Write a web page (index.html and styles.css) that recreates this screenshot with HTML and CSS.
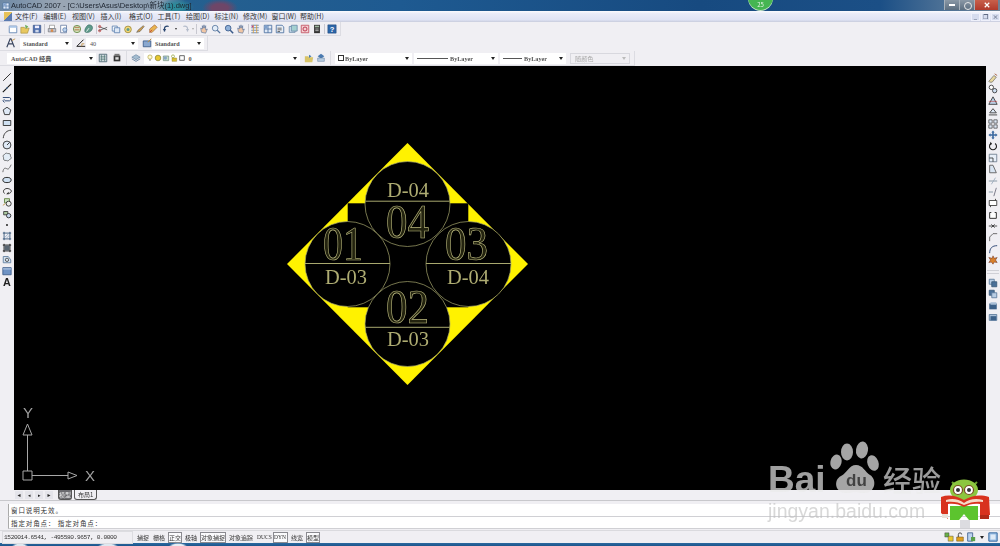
FILE: index.html
```html
<!DOCTYPE html>
<html lang="zh-CN">
<head>
<meta charset="utf-8">
<title>AutoCAD 2007</title>
<link rel="stylesheet" href="styles.css">
</head>
<body>
<svg class="defs" width="0" height="0" aria-hidden="true">
  <defs>
    <symbol id="i-new" viewBox="0 0 12 12"><path d="M1.5 2.5h9v8h-9z" fill="#fff" stroke="#5a7fb0"/><path d="M1.5 2.5h9v2h-9z" fill="#a9c4e6"/></symbol>
    <symbol id="i-open" viewBox="0 0 12 12"><path d="M1 4h4l1 1h5l-2 6H1z" fill="#e8c860" stroke="#a08a3a" stroke-width=".7"/><path d="M6 1l4 2-3 3z" fill="#6fae5a"/></symbol>
    <symbol id="i-save" viewBox="0 0 12 12"><path d="M1.5 1.5h9v9h-9z" fill="#4f6fae" stroke="#2f4a80" stroke-width=".7"/><path d="M3.5 2h5v3h-5z" fill="#eef"/><path d="M4 7h4v3H4z" fill="#cfd8ea"/></symbol>
    <symbol id="i-print" viewBox="0 0 12 12"><path d="M3 1.5h6v4H3z" fill="#fff" stroke="#777" stroke-width=".7"/><path d="M1.5 5.5h9v4h-9z" fill="#c3c6d2" stroke="#666" stroke-width=".7"/><circle cx="6" cy="8" r="1.6" fill="#d98a4a"/></symbol>
    <symbol id="i-prev" viewBox="0 0 12 12"><path d="M2 1.5h7v9H2z" fill="#fff" stroke="#6b7fa5"/><circle cx="7" cy="7" r="2.5" fill="#bcd3ee" stroke="#4a6a9a" stroke-width=".8"/></symbol>
    <symbol id="i-plot" viewBox="0 0 12 12"><circle cx="6" cy="6" r="4.4" fill="#cfe0b8" stroke="#6a8a4a"/><path d="M3 4h6M3 7h6" stroke="#b05a30" stroke-width=".9"/></symbol>
    <symbol id="i-pub" viewBox="0 0 12 12"><path d="M6 1c3 0 5 2 4 5s-5 5-8 4 1-9 4-9z" fill="#5f9a8a" stroke="#3a6a66" stroke-width=".7"/><path d="M3 9l3-4" stroke="#fff"/></symbol>
    <symbol id="i-cut" viewBox="0 0 12 12"><path d="M1 3l10 4M1 8l10-4" stroke="#444" stroke-width=".9" fill="none"/><circle cx="2" cy="3" r="1.3" fill="none" stroke="#c04040"/><circle cx="2" cy="8" r="1.3" fill="none" stroke="#c04040"/></symbol>
    <symbol id="i-copy" viewBox="0 0 12 12"><path d="M1.5 2.5h6v6h-6z" fill="#fff" stroke="#5a7fb0"/><path d="M4 4.5h6.500v6H4z" fill="#dfe9f6" stroke="#5a7fb0"/></symbol>
    <symbol id="i-paste" viewBox="0 0 12 12"><circle cx="6" cy="6.5" r="4" fill="#f2d878" stroke="#a08a3a"/><circle cx="6" cy="6.5" r="1.8" fill="#5f9a8a"/></symbol>
    <symbol id="i-brush" viewBox="0 0 12 12"><path d="M2 10l2-3 6-5 1 1-5 6z" fill="#d2a04a" stroke="#555" stroke-width=".7"/></symbol>
    <symbol id="i-match" viewBox="0 0 12 12"><path d="M2 10V6l6-5 3 3-6 6z" fill="#e8b450" stroke="#9a5a30" stroke-width=".7"/><path d="M2 10l3-3" stroke="#c04040"/></symbol>
    <symbol id="i-undo" viewBox="0 0 12 12"><path d="M3 9V5c0-2 3-3 5-2" fill="none" stroke="#26446e" stroke-width="1.6"/><path d="M1 6l2 3 2-3z" fill="#26446e"/></symbol>
    <symbol id="i-redo" viewBox="0 0 12 12"><path d="M9 9V5C9 3 6 2 4 3" fill="none" stroke="#b4bccb" stroke-width="1.4"/><path d="M7 6l2 3 2-3z" fill="#b4bccb"/></symbol>
    <symbol id="i-pan" viewBox="0 0 12 12"><path d="M3 10L2 5l2 1V2l1 3 1-4 1 4 1-3v5l2-1-2 5z" fill="#f1c6a4" stroke="#4a6a9a" stroke-width=".7"/></symbol>
    <symbol id="i-zoom" viewBox="0 0 12 12"><circle cx="5" cy="5" r="3.4" fill="#e3edf8" stroke="#55759e"/><path d="M7.5 7.5l3.500 3.500" stroke="#55759e" stroke-width="1.500"/></symbol>
    <symbol id="i-zoomb" viewBox="0 0 12 12"><circle cx="5" cy="5" r="3.4" fill="#8fb0d8" stroke="#3a5a8a"/><path d="M7.5 7.5l3.500 3.500" stroke="#3a5a8a" stroke-width="1.8"/></symbol>
    <symbol id="i-prop" viewBox="0 0 12 12"><path d="M1.5 1.5h9M1.5 4.5h9M1.5 7.5h9M1.5 10.5h9" stroke="#5a7fb0"/><path d="M4 1v10M8 1v10" stroke="#d9a040"/><path d="M2 2h2v2H2z" fill="#c04080"/></symbol>
    <symbol id="i-dc" viewBox="0 0 12 12"><path d="M1.5 1.5h9v9h-9z" fill="#dfe9f6" stroke="#4a6fa0"/><path d="M6 1.5v9M1.5 6h9" stroke="#4a6fa0"/><path d="M2 2h3.500v3.500H2z" fill="#7fa0cc"/></symbol>
    <symbol id="i-tp" viewBox="0 0 12 12"><path d="M1.5 1.5h7l2 2v7h-9z" fill="#e8eef6" stroke="#4a6fa0"/><path d="M3 5h5M3 7h5M3 9h3" stroke="#555"/></symbol>
    <symbol id="i-sheet" viewBox="0 0 12 12"><path d="M1.5 3h7v7h-7z" fill="#cfe2f0" stroke="#6a8aa8"/><path d="M4 1.5h7v7H4z" fill="#a4d0d0" stroke="#6a8aa8"/></symbol>
    <symbol id="i-mark" viewBox="0 0 12 12"><path d="M1.5 1.5h9v9h-9z" fill="#f4cfd0" stroke="#c05060"/><circle cx="6" cy="6" r="2.4" fill="none" stroke="#b02040"/></symbol>
    <symbol id="i-calc" viewBox="0 0 12 12"><path d="M2.5 1h7v10h-7z" fill="#333"/><path d="M3.5 2h5v2h-5z" fill="#9fb8a0"/><path d="M4 6h4M4 8h4" stroke="#ccc"/></symbol>
    <symbol id="i-help" viewBox="0 0 12 12"><path d="M1 1h10v10H1z" fill="#2c66a8" stroke="#1c4478" stroke-width=".6"/><text x="6" y="9.3" class="help-q">?</text></symbol>
    <symbol id="i-style" viewBox="0 0 12 12"><path d="M1 11L5 1h1l4 10M3 7h5" fill="none" stroke="#3a4660" stroke-width="1.4"/><path d="M7 3l4-2" stroke="#c09040"/></symbol>
    <symbol id="i-dim" viewBox="0 0 12 12"><path d="M1 10h10M1 10L9 2" stroke="#222" stroke-width="1.2" fill="none"/><path d="M7 10v-3h3" stroke="#c09040" fill="none"/></symbol>
    <symbol id="i-tab" viewBox="0 0 12 12"><path d="M1.5 3.500h9v7h-9z" fill="#8aa8d0" stroke="#3a5a88"/><path d="M7 5l4-4" stroke="#c09040" stroke-width="1.2"/></symbol>
    <symbol id="i-ws" viewBox="0 0 12 12"><path d="M1.5 1.5h9v9h-9z" fill="#dfe5ea" stroke="#44606e"/><path d="M3 4h6M3 6h6M3 8h6M4 2v8M8 2v8" stroke="#46706a" stroke-width=".8"/></symbol>
    <symbol id="i-ws2" viewBox="0 0 12 12"><path d="M2 3h8v7H2z" fill="#333"/><path d="M3 1h6v3H3z" fill="#777"/><path d="M4 5h4v3H4z" fill="#ddd"/></symbol>
    <symbol id="i-layer" viewBox="0 0 12 12"><path d="M6 2l5 3-5 3-5-3z" fill="#a4bcd0" stroke="#5a7a9a" stroke-width=".7"/><path d="M1 7l5 3 5-3" fill="none" stroke="#5a7a9a"/></symbol>
    <symbol id="i-bulb" viewBox="0 0 12 12"><circle cx="6" cy="4.6" r="3.2" fill="#fffbd0" stroke="#b0a040"/><path d="M5 8h2v2H5z" fill="#888"/></symbol>
    <symbol id="i-sun" viewBox="0 0 12 12"><circle cx="6" cy="6" r="4.2" fill="#e8c830" stroke="#7a7a30"/></symbol>
    <symbol id="i-frz" viewBox="0 0 12 12"><path d="M2 3h8v7H2z" fill="#c8dfc8" stroke="#6a8a7a"/><circle cx="5" cy="6" r="2.6" fill="#8aa8c8"/></symbol>
    <symbol id="i-lock" viewBox="0 0 12 12"><circle cx="4.5" cy="3.5" r="2.2" fill="none" stroke="#8a9a30"/><path d="M3 6h7v5H3z" fill="#d8c030" stroke="#8a7a30" stroke-width=".6"/></symbol>
    <symbol id="i-box" viewBox="0 0 12 12"><path d="M2.500 2.500h7v7h-7z" fill="#fff" stroke="#222"/></symbol>
    <symbol id="i-lprev" viewBox="0 0 12 12"><path d="M1 4h4l1 1h5l-1 6H1z" fill="#d8c468"/><path d="M6 2l3 2-3 2z" fill="#4a7ab0"/></symbol>
    <symbol id="i-lset" viewBox="0 0 12 12"><path d="M6 1l4 3-4 3-4-3z" fill="#4a7ab0"/><path d="M2 6h8v4H2z" fill="#b8cce0" stroke="#5a7a9a" stroke-width=".6"/></symbol>
    <symbol id="d-line" viewBox="0 0 12 12"><path d="M1.5 10.500l9-9" stroke="#222" stroke-width="1.1"/></symbol>
    <symbol id="d-xline" viewBox="0 0 12 12"><path d="M1 11L11 1" stroke="#111" stroke-width="1.3"/><circle cx="6" cy="6" r="1" fill="#4a7ab0"/></symbol>
    <symbol id="d-pline" viewBox="0 0 12 12"><path d="M1 3h8c2 0 2 4 0 4H3" fill="none" stroke="#24406e" stroke-width="1.1"/><path d="M3 5l-2 2 2 2" fill="none" stroke="#24406e"/></symbol>
    <symbol id="d-poly" viewBox="0 0 12 12"><path d="M6 1.500l4.600 3.200-1.700 5.600H3.100L1.400 4.700z" fill="#dfe9f6" stroke="#222"/></symbol>
    <symbol id="d-rect" viewBox="0 0 12 12"><path d="M1.500 3h9v6h-9z" fill="#cfe0f2" stroke="#222"/></symbol>
    <symbol id="d-arc" viewBox="0 0 12 12"><path d="M1.500 11C2 5 6 1.500 11 1.500" fill="none" stroke="#333" stroke-width="1.1"/></symbol>
    <symbol id="d-circle" viewBox="0 0 12 12"><circle cx="6" cy="6" r="4.700" fill="#dfe9f6" stroke="#222"/><path d="M6 6l3-3" stroke="#222"/></symbol>
    <symbol id="d-cloud" viewBox="0 0 12 12"><path d="M3 3c1-2 3-2 4-1 2-1 4 1 3 3 2 1 1 4-1 4-1 2-3 2-4 1-2 1-4-1-3-3C1 6 1 3 3 3z" fill="#e3ecf6" stroke="#444" stroke-width=".8"/></symbol>
    <symbol id="d-spline" viewBox="0 0 12 12"><path d="M1 11c1-6 3-5 5-4s3-1 5-5" fill="none" stroke="#555"/></symbol>
    <symbol id="d-ell" viewBox="0 0 12 12"><ellipse cx="6" cy="6" rx="5" ry="3.100" fill="#cfe0f2" stroke="#222" stroke-width="1.1"/></symbol>
    <symbol id="d-ellarc" viewBox="0 0 12 12"><path d="M3 9C0 6 3 3 6 3s6 2 5 4c-.5 1-2 2-3 2" fill="none" stroke="#222" stroke-width="1.1"/><path d="M8 7v3h-3" fill="#222"/></symbol>
    <symbol id="d-ins" viewBox="0 0 12 12"><path d="M3 2h6v5H3z" fill="#c8dfc0" stroke="#5a7a3a"/><circle cx="8" cy="8" r="3" fill="#eee" stroke="#222"/><path d="M1 10l3-2" stroke="#c09040"/></symbol>
    <symbol id="d-blk" viewBox="0 0 12 12"><path d="M2 3h5v4H2z" fill="#aac8a0" stroke="#333"/><circle cx="8" cy="8" r="2.600" fill="#c8d8ee" stroke="#222"/></symbol>
    <symbol id="d-pt" viewBox="0 0 12 12"><circle cx="6" cy="6" r="1.100" fill="#111"/></symbol>
    <symbol id="d-hatch" viewBox="0 0 12 12"><path d="M2.500 1v10M9.500 1v10M1 2.500h10M1 9.500h10" stroke="#2a4a70" stroke-width="1"/><path d="M3 8l5-5M5 9l4-4" stroke="#7a9abc" stroke-width=".8"/></symbol>
    <symbol id="d-grad" viewBox="0 0 12 12"><path d="M2.500 1v10M9.500 1v10M1 2.500h10M1 9.500h10" stroke="#222" stroke-width="1.200"/><path d="M3 3h6v6H3z" fill="#5a6672"/></symbol>
    <symbol id="d-reg" viewBox="0 0 12 12"><path d="M1.500 3h6l3 4v3.500h-9z" fill="#d4e2f0" stroke="#5a7a9a"/><circle cx="6" cy="7" r="2" fill="none" stroke="#444"/></symbol>
    <symbol id="d-tbl" viewBox="0 0 12 12"><path d="M1 2h10v8.500H1z" fill="#6f93c4" stroke="#3a5a88"/><path d="M1 3.500h10" stroke="#cfdff0"/></symbol>
    <symbol id="d-a" viewBox="0 0 12 12"><text x="6" y="11" class="a-glyph">A</text></symbol>
    <symbol id="m-erase" viewBox="0 0 12 12"><path d="M1 10l6-7 3 2-5 6H2z" fill="#e8d8a0" stroke="#555" stroke-width=".7"/><path d="M8 1l3 2" stroke="#a05030"/></symbol>
    <symbol id="m-copy" viewBox="0 0 12 12"><circle cx="4" cy="4" r="2.600" fill="#fff" stroke="#333"/><circle cx="8" cy="8" r="2.600" fill="#cfe0f2" stroke="#333"/></symbol>
    <symbol id="m-mirror" viewBox="0 0 12 12"><path d="M6 1L1 10h10z" fill="#bcd0e6" stroke="#333"/><path d="M1 6.500h10" stroke="#c04040" stroke-width=".7"/></symbol>
    <symbol id="m-off" viewBox="0 0 12 12"><path d="M6 2L2 7h8z" fill="#dfe9f6" stroke="#333"/><path d="M1 9.500h10" stroke="#333"/></symbol>
    <symbol id="m-arr" viewBox="0 0 12 12"><path d="M1 1h4v4H1zM7 1h4v4H7zM1 7h4v4H1zM7 7h4v4H7z" fill="#dfe9f6" stroke="#333" stroke-width=".8"/></symbol>
    <symbol id="m-move" viewBox="0 0 12 12"><path d="M6 .5L8 3H7v2h2V4l2.500 2L9 8V7H7v2h1l-2 2.500L4 9h1V7H3v1L.5 6 3 4v1h2V3H4z" fill="#3c6aa0"/></symbol>
    <symbol id="m-rot" viewBox="0 0 12 12"><path d="M8.500 3A4.200 4.200 0 1 1 3.500 3" fill="none" stroke="#222" stroke-width="1.300"/><path d="M3 1l2 2.500L2 5z" fill="#222"/></symbol>
    <symbol id="m-scale" viewBox="0 0 12 12"><path d="M1.500 1.500h9v9h-9z" fill="#e8eff8" stroke="#6a7a8a"/><path d="M1.500 6h4.500v4.500" fill="none" stroke="#333"/></symbol>
    <symbol id="m-str" viewBox="0 0 12 12"><path d="M2 1.500h4l4 9H2z" fill="#d8e4f2" stroke="#555"/></symbol>
    <symbol id="m-trim" viewBox="0 0 12 12"><path d="M1 6h10" stroke="#7a8a9a"/><path d="M9 2L4 10" stroke="#9ab"/></symbol>
    <symbol id="m-ext" viewBox="0 0 12 12"><path d="M1 6h5" stroke="#7a8a9a"/><path d="M10 1L7 11" stroke="#667"/></symbol>
    <symbol id="m-brk" viewBox="0 0 12 12"><path d="M1.500 3h9v6h-9z" fill="#fff" stroke="#333"/><path d="M9 1v2M3 9v2" stroke="#333"/></symbol>
    <symbol id="m-brka" viewBox="0 0 12 12"><path d="M2 3v7h8V3M2 3h2M8 3h2" fill="#fff" stroke="#222" stroke-width="1.100"/></symbol>
    <symbol id="m-join" viewBox="0 0 12 12"><path d="M1 6h10" stroke="#333"/><path d="M4 4l2 2-2 2M8 4L6 6l2 2" fill="none" stroke="#333"/></symbol>
    <symbol id="m-chm" viewBox="0 0 12 12"><path d="M2 11V6l4-4h5" fill="none" stroke="#555"/></symbol>
    <symbol id="m-fil" viewBox="0 0 12 12"><path d="M2 11C2 5 5 2 11 2" fill="none" stroke="#24406e" stroke-width="1.100"/></symbol>
    <symbol id="m-exp" viewBox="0 0 12 12"><path d="M6 1l1.500 3L11 3 9 6l2 3-3.500-.5L6 11 4 8.500 1 9l2-3-2-3 4 1z" fill="#d8802a" stroke="#6a2a1a" stroke-width=".6"/></symbol>
    <symbol id="o-a" viewBox="0 0 12 12"><path d="M1.500 1.500h6v6h-6z" fill="#b8cde4" stroke="#5a7a9a"/><path d="M4.500 4.500h6v6h-6z" fill="#4a7098" stroke="#3a5a7a"/></symbol>
    <symbol id="o-b" viewBox="0 0 12 12"><path d="M1.500 1.500h6v6h-6z" fill="#4a7098" stroke="#3a5a7a"/><path d="M4.500 4.500h6v6h-6z" fill="#b8cde4" stroke="#5a7a9a"/></symbol>
    <symbol id="o-c" viewBox="0 0 12 12"><path d="M1.500 3h9v7h-9z" fill="#3c6088"/><path d="M3 1.500h7v3H3z" fill="#a8bed6"/></symbol>
    <symbol id="o-d" viewBox="0 0 12 12"><path d="M1.500 3h9v7h-9z" fill="#a8bed6" stroke="#5a7a9a"/><path d="M3 5h7v5H3z" fill="#3c6088"/></symbol>
    <symbol id="t-a" viewBox="0 0 12 12"><path d="M1 1h5v5H1z" fill="#6ab04a" stroke="#333" stroke-width=".5"/><path d="M5 5h6v6H5z" fill="#e8c830" stroke="#333" stroke-width=".5"/></symbol>
    <symbol id="t-b" viewBox="0 0 12 12"><path d="M2 6h8v5H2z" fill="#e0a020" stroke="#6a4a10" stroke-width=".6"/><path d="M4 6V3a2 2 0 0 1 4 0" fill="none" stroke="#333"/></symbol>
    <symbol id="t-c" viewBox="0 0 12 12"><path d="M2 1h6v10H2z" fill="#bcd3ee" stroke="#3a5a88"/><path d="M6 6h5v5H6z" fill="#5aa04a"/></symbol>
    <symbol id="t-d" viewBox="0 0 12 12"><path d="M1 1h10v10H1z" fill="#9cc0e6" stroke="#3a6aa0" stroke-width="1.200"/><path d="M3 3h6v6H3z" fill="#dfeaf6"/></symbol>
  </defs>
</svg>

<div class="app">
  <header class="titlebar">
    <svg class="app-icon"><use href="#i-dc"/></svg>
    <span class="title">AutoCAD 2007 - [C:\Users\Asus\Desktop\新块(1).dwg]</span>
    <span class="badge">25</span>
    <div class="winbtns"><span class="wb wb-min"></span><span class="wb wb-max"></span><span class="wb wb-close"><svg class="x-mark" viewBox="0 0 8 8"><path d="M1 1l6 6M7 1L1 7"/></svg></span></div>
  </header>

  <nav class="menubar">
    <span class="menu-logo"></span>
    <span class="menu">文件(F)</span><span class="menu">编辑(E)</span><span class="menu">视图(V)</span><span class="menu">插入(I)</span><span class="menu">格式(O)</span><span class="menu">工具(T)</span><span class="menu">绘图(D)</span><span class="menu">标注(N)</span><span class="menu">修改(M)</span><span class="menu">窗口(W)</span><span class="menu">帮助(H)</span>
    <div class="mdi"><span class="mdi-btn">_</span><span class="mdi-btn">❐</span><span class="mdi-btn">×</span></div>
  </nav>

  <div class="tbrow tbrow-1">
    <div class="tbar tbar-std">
      <svg class="ic"><use href="#i-new"/></svg><svg class="ic"><use href="#i-open"/></svg><svg class="ic"><use href="#i-save"/></svg><i class="sep"></i>
      <svg class="ic"><use href="#i-print"/></svg><svg class="ic"><use href="#i-prev"/></svg><svg class="ic"><use href="#i-plot"/></svg><svg class="ic"><use href="#i-pub"/></svg><i class="sep"></i>
      <svg class="ic"><use href="#i-cut"/></svg><svg class="ic"><use href="#i-copy"/></svg><svg class="ic"><use href="#i-paste"/></svg><svg class="ic"><use href="#i-brush"/></svg><svg class="ic"><use href="#i-match"/></svg><i class="sep"></i>
      <svg class="ic"><use href="#i-undo"/></svg><i class="caret-s"></i><svg class="ic"><use href="#i-redo"/></svg><i class="caret-s caret-off"></i><i class="sep"></i>
      <svg class="ic"><use href="#i-pan"/></svg><svg class="ic"><use href="#i-zoom"/></svg><svg class="ic"><use href="#i-zoomb"/></svg><svg class="ic"><use href="#i-pan"/></svg><i class="sep"></i>
      <svg class="ic"><use href="#i-prop"/></svg><svg class="ic"><use href="#i-dc"/></svg><svg class="ic"><use href="#i-tp"/></svg><svg class="ic"><use href="#i-sheet"/></svg><svg class="ic"><use href="#i-mark"/></svg><svg class="ic"><use href="#i-calc"/></svg><i class="sep"></i>
      <svg class="ic"><use href="#i-help"/></svg>
    </div>
  </div>

  <div class="tbrow tbrow-2">
    <div class="tbar tbar-style">
      <svg class="ic ic-first"><use href="#i-style"/></svg>
      <div class="combo combo-s"><span>Standard</span><i class="caret"></i></div>
      <svg class="ic ic-wide"><use href="#i-dim"/></svg>
      <div class="combo combo-s combo-t"><span>40</span><i class="caret"></i></div>
      <svg class="ic ic-wide"><use href="#i-tab"/></svg>
      <div class="combo combo-s"><span>Standard</span><i class="caret"></i></div>
    </div>
  </div>

  <div class="tbrow tbrow-3">
    <div class="tbar tbar-ws">
      <div class="combo combo-ws"><span>AutoCAD 经典</span><i class="caret"></i></div>
      <svg class="ic"><use href="#i-ws"/></svg><svg class="ic"><use href="#i-ws2"/></svg>
    </div>
    <div class="tbar tbar-layer">
      <svg class="ic"><use href="#i-layer"/></svg>
      <div class="combo combo-layer">
        <svg class="lic"><use href="#i-bulb"/></svg><svg class="lic"><use href="#i-sun"/></svg><svg class="lic"><use href="#i-frz"/></svg><svg class="lic"><use href="#i-lock"/></svg><svg class="lic"><use href="#i-box"/></svg><span>0</span><i class="caret"></i>
      </div>
      <svg class="ic"><use href="#i-lprev"/></svg><svg class="ic"><use href="#i-lset"/></svg>
    </div>
    <div class="tbar tbar-prop">
      <div class="combo combo-bl1"><i class="swatch"></i><span>ByLayer</span><i class="caret"></i></div>
      <div class="combo combo-bl2"><i class="lw lw-long"></i><span>ByLayer</span><i class="caret"></i></div>
      <div class="combo combo-bl3"><i class="lw"></i><span>ByLayer</span><i class="caret"></i></div>
      <div class="combo combo-off"><span>随颜色</span><i class="caret"></i></div>
    </div>
  </div>

  <main class="work">
    <aside class="vbar vbar-left">
      <svg class="vic"><use href="#d-line"/></svg><svg class="vic"><use href="#d-xline"/></svg><svg class="vic"><use href="#d-pline"/></svg><svg class="vic"><use href="#d-poly"/></svg><svg class="vic"><use href="#d-rect"/></svg><svg class="vic"><use href="#d-arc"/></svg><svg class="vic"><use href="#d-circle"/></svg><svg class="vic"><use href="#d-cloud"/></svg><svg class="vic"><use href="#d-spline"/></svg><svg class="vic"><use href="#d-ell"/></svg><svg class="vic"><use href="#d-ellarc"/></svg><svg class="vic"><use href="#d-ins"/></svg><svg class="vic"><use href="#d-blk"/></svg><svg class="vic"><use href="#d-pt"/></svg><svg class="vic"><use href="#d-hatch"/></svg><svg class="vic"><use href="#d-grad"/></svg><svg class="vic"><use href="#d-reg"/></svg><svg class="vic"><use href="#d-tbl"/></svg><svg class="vic"><use href="#d-a"/></svg>
    </aside>

    <div class="canvas">
      <svg class="drawing" viewBox="14 66 972 424" width="972" height="424">
        <polygon points="407.5,143 528,264 407.5,385 287,264" class="yel"/>
        <rect x="347.7" y="203.3" width="120.6" height="104" class="blk"/>
        <circle cx="407.5" cy="204" r="42.5" class="cir"/>
        <circle cx="347.5" cy="264" r="42.5" class="cir"/>
        <circle cx="468.5" cy="264" r="42.5" class="cir"/>
        <circle cx="407.5" cy="324" r="42.5" class="cir"/>
        <path d="M365.5 201.2h84M305 263.5h85M426 263.5h85M365.5 327.3h84" class="chord"/>
        <text x="407.5" y="238" textLength="43" lengthAdjust="spacingAndGlyphs" class="big">04</text>
        <text x="343" y="260" textLength="40" lengthAdjust="spacingAndGlyphs" class="big">01</text>
        <text x="466.5" y="260" textLength="43" lengthAdjust="spacingAndGlyphs" class="big">03</text>
        <text x="407.5" y="323" textLength="43" lengthAdjust="spacingAndGlyphs" class="big">02</text>
        <text x="408" y="197" textLength="42" lengthAdjust="spacingAndGlyphs" class="small">D-04</text>
        <text x="346" y="284" textLength="42" lengthAdjust="spacingAndGlyphs" class="small">D-03</text>
        <text x="468" y="284" textLength="42" lengthAdjust="spacingAndGlyphs" class="small">D-04</text>
        <text x="408" y="345.5" textLength="42" lengthAdjust="spacingAndGlyphs" class="small">D-03</text>
        <path d="M27.5 471V435M23 435l4.500-11 4.500 11zM32 475.500h36M68 472l9 3.500-9 3.500zM23 471h9v9h-9z" class="ucs"/>
        <text x="28" y="418" class="ucs-t">Y</text>
        <text x="90" y="481" class="ucs-t">X</text>
      </svg>
    </div>

    <aside class="vbar vbar-right">
      <svg class="vic"><use href="#m-erase"/></svg><svg class="vic"><use href="#m-copy"/></svg><svg class="vic"><use href="#m-mirror"/></svg><svg class="vic"><use href="#m-off"/></svg><svg class="vic"><use href="#m-arr"/></svg><svg class="vic"><use href="#m-move"/></svg><svg class="vic"><use href="#m-rot"/></svg><svg class="vic"><use href="#m-scale"/></svg><svg class="vic"><use href="#m-str"/></svg><svg class="vic"><use href="#m-trim"/></svg><svg class="vic"><use href="#m-ext"/></svg><svg class="vic"><use href="#m-brk"/></svg><svg class="vic"><use href="#m-brka"/></svg><svg class="vic"><use href="#m-join"/></svg><svg class="vic"><use href="#m-chm"/></svg><svg class="vic"><use href="#m-fil"/></svg><svg class="vic"><use href="#m-exp"/></svg>
      <i class="vsep"></i>
      <svg class="vic"><use href="#o-a"/></svg><svg class="vic"><use href="#o-b"/></svg><svg class="vic"><use href="#o-c"/></svg><svg class="vic"><use href="#o-d"/></svg>
    </aside>
  </main>

  <div class="tabs">
    <div class="tabnav"><span>◄</span><span>◂</span><span>▸</span><span>►</span></div>
    <span class="tab tab-on">模型</span><span class="tab">布局1</span>
  </div>

  <section class="command">
    <div class="cmd-line">窗口说明无效。</div>
    <div class="cmd-line">指定对角点： 指定对角点：</div>
    <div class="cmd-scroll"><i class="cmd-thumb"></i></div>
  </section>

  <footer class="status">
    <span class="coords">1520014.6541, -495580.9657, 0.0000</span>
    <span class="st">捕捉</span><span class="st">栅格</span><span class="st st-on">正交</span><span class="st">极轴</span><span class="st st-on">对象捕捉</span><span class="st">对象追踪</span><span class="st st-l">DUCS</span><span class="st st-l st-on">DYN</span><span class="st">线宽</span><span class="st st-on">模型</span>
    <div class="tray"><svg class="tic"><use href="#t-a"/></svg><svg class="tic"><use href="#t-b"/></svg><svg class="tic"><use href="#t-c"/></svg><i class="caret"></i><svg class="tic"><use href="#t-d"/></svg></div>
  </footer>

  <div class="taskbar"></div>
</div>

<div class="wm">
  <svg class="wm-paw" viewBox="0 0 60 60" width="60" height="60">
    <ellipse cx="18" cy="13" rx="6" ry="8.5"/><ellipse cx="33" cy="11" rx="6" ry="8.5" transform="rotate(8 33 11)"/><ellipse cx="44" cy="24" rx="5.5" ry="8" transform="rotate(-20 44 24)"/><ellipse cx="7" cy="23" rx="5.5" ry="7.5" transform="rotate(15 7 23)"/>
    <path d="M27 26c7 0 9 7 14 10 7 4 6 18-6 18-4 0-6-1-9-1s-5 1-9 1C6 54 4 41 12 37c6-3 8-11 15-11z"/>
  </svg>
  <span class="wm-bai">Bai</span>
  <span class="wm-du">du</span>
  <span class="wm-cn">经验</span>
  <span class="wm-url">jingyan.baidu.com</span>
  <svg class="mascot" viewBox="0 0 52 48" width="52" height="48">
    <path d="M12 4l3 3M37 4l-3 3" stroke="#6aa030" stroke-width="2"/>
    <ellipse cx="24" cy="12" rx="14" ry="10.500" fill="#8cc63f"/>
    <circle cx="18" cy="12" r="4.500" fill="#fff" stroke="#7a4a20" stroke-width="1.200"/><circle cx="29" cy="12" r="4.500" fill="#fff" stroke="#7a4a20" stroke-width="1.200"/>
    <circle cx="18" cy="12" r="2" fill="#333"/><circle cx="29" cy="12" r="2" fill="#333"/>
    <path d="M10 28h28v14h-9l-5-6-5 6h-9z" fill="#5cc42e"/>
    <path d="M1 19c8-3 16-1 23 3 7-4 15-6 25-3l1 18H40V26c-5-1-11 0-16 3-5-3-11-4-16-3v15l-7-6z" fill="#d8321e"/>
    <path d="M6 22c6-2 13-1 18 3 5-4 12-5 19-3v2c-6-1-13 0-19 3-5-3-12-4-18-3z" fill="#f6d9c8"/>
    <path d="M40 37h9v4H40z" fill="#b02a18"/><path d="M2 36h6v4H2z" fill="#e8e0d8"/>
  </svg>
</div>
</body>
</html>
```

FILE: styles.css
```css
* { box-sizing: border-box; }
html, body { margin: 0; padding: 0; }
body {
  width: 1000px;
  height: 546px;
  overflow: hidden;
  position: relative;
  background: #f0eff3;
  font-family: "Noto Sans CJK SC", "Liberation Sans", sans-serif;
  color: #222;
}
.defs { position: absolute; }
.help-q { font: bold 9px "Liberation Sans", sans-serif; fill: #fff; text-anchor: middle; }
.a-glyph { font: bold 13px "Liberation Sans", sans-serif; fill: #222; text-anchor: middle; }

.app {
  width: 1000px;
  height: 546px;
  display: flex;
  flex-direction: column;
  filter: blur(.4px);
}

/* title bar */
.titlebar {
  height: 11px;
  flex: none;
  position: relative;
  display: flex;
  align-items: center;
  gap: 1px;
  padding-left: 2px;
  overflow: hidden;
  background:
    radial-gradient(ellipse 18px 9px at 220px 8px, #6e4668 0 45%, transparent 100%),
    radial-gradient(ellipse 18px 8px at 176px 7px, #2d8a9a 0 35%, transparent 100%),
    linear-gradient(90deg, #6f8aa6 0, #9aa6b4 60px, #8c9fb2 160px, #25608f 185px, #1e5a91 400px, #174a80 700px, #1b4f86 880px, #4a6f95 940px, #6e8296 1000px);
}
.app-icon { width: 8px; height: 8px; flex: none; }
.title { font: 7.5px/11px "Liberation Sans", "Noto Sans CJK SC", sans-serif; color: #1e2530; white-space: nowrap; }
.badge {
  position: absolute;
  left: 748px;
  top: -15px;
  width: 25px;
  height: 25px;
  border-radius: 50%;
  background: #45b552;
  box-shadow: 0 1px 0 #c4e6c4;
  color: #e8f6e8;
  font-size: 6px;
  line-height: 6px;
  text-align: center;
  padding-top: 17px;
}
.winbtns { position: absolute; right: 2px; top: 0; display: flex; height: 10px; }
.wb { display: block; height: 10px; background: linear-gradient(#8a98a6, #5c6e80); border-left: 1px solid #a6b0ba; position: relative; }
.wb-min { width: 15px; }
.wb-min::after { content: ""; position: absolute; left: 4px; top: 4px; width: 6px; height: 2px; background: #fff; }
.wb-max { width: 15px; }
.wb-max::after { content: ""; position: absolute; left: 4px; top: 2px; width: 6px; height: 6px; border: 1px solid #e8e8e8; border-radius: 50%; }
.wb-close { width: 24px; background: linear-gradient(#c8604c, #b03a2c); display: flex; align-items: center; justify-content: center; }
.x-mark { width: 6px; height: 6px; stroke: #fff; stroke-width: 1.6; fill: none; }

/* menu */
.menubar {
  height: 11px;
  flex: none;
  display: flex;
  align-items: center;
  gap: 9px;
  padding-left: 4px;
  position: relative;
  background: linear-gradient(#fbfbfe 0, #e9ebf8 25%, #dfe3f4 80%, #c8ccdc 100%);
}
.menu-logo { width: 8px; height: 9px; margin-right: -6px; background: linear-gradient(135deg, #e6c25a 50%, #5a7ab0 50%); flex: none; }
.menu { font-size: 7px; line-height: 11px; width: 19.5px; white-space: nowrap; color: #333; flex: none; }
.mdi { position: absolute; right: 0; top: 2px; display: flex; gap: 1px; }
.mdi-btn { width: 9px; height: 8px; background: #d6dcee; border: 1px solid #eef0fa; font-size: 6px; line-height: 6px; text-align: center; color: #3a4660; }

/* toolbars */
.tbrow { flex: none; display: flex; background: #f0eff3; }
.tbrow-1 { height: 14px; }
.tbrow-2 { height: 15px; }
.tbrow-3 { height: 15px; }
.tbar { display: flex; align-items: center; height: 100%; border-right: 1px solid #dcdce2; border-bottom: 1px solid #dcdce2; }
.tbar-std { padding-left: 6.5px; width: 341px; }
.tbar-style { padding-left: 5px; width: 208px; }
.tbar-ws { padding-left: 7px; width: 127px; gap: 1px; }
.tbar-layer { width: 204px; padding-left: 3px; }
.tbar-prop { width: 304px; padding-left: 4px; gap: 2px; }
.ic { width: 10px; height: 10px; margin: 0 1.2px; flex: none; }
.ic-first { margin-right: 3.8px; }
.ic-wide { margin: 0 0 0 4px; }
.sep { width: 1px; height: 10px; background: #c8c8d0; margin: 0 .5px; flex: none; }
.caret-s { width: 0; height: 0; border: 1.5px solid transparent; border-top: 2px solid #333; margin: 2px 1.5px 0; flex: none; }
.caret-off { border-top-color: #aaa; }
.combo {
  display: flex;
  align-items: center;
  height: 11px;
  background: #fff;
  padding: 0 3px;
  font-family: "Liberation Serif", "Noto Sans CJK SC", serif;
  font-size: 6.2px;
  font-weight: bold;
  color: #555;
  white-space: nowrap;
  flex: none;
}
.combo span { flex: 1; }
.caret { width: 0; height: 0; border: 2px solid transparent; border-top: 3px solid #222; border-bottom: 0; flex: none; }
.combo-s { width: 52px; }
.combo-t { font-weight: normal; padding-left: 4px; }
.combo-ws { width: 89px; padding-left: 4px; }
.combo-layer { width: 156px; gap: 0; margin: 0 2px; padding-left: 2px; }
.lic { width: 8px; height: 8px; flex: none; }
.combo-layer span { margin-left: 2px; }
.combo-bl1 { width: 77px; }
.combo-bl2 { width: 84px; }
.combo-bl3 { width: 66px; }
.combo-off { width: 60px; margin-left: 2px; background: #f0eff3; border: 1px solid #d8d8de; color: #aaa; font-weight: normal; font-family: "Noto Sans CJK SC", sans-serif; padding-left: 4px; }
.combo-off .caret { border-top-color: #bbb; }
.swatch { width: 6px; height: 6px; border: 1px solid #333; margin-right: 1px; flex: none; background: #fff; }
.lw { display: block; width: 19px; height: 1px; background: #555; margin-right: 2px; flex: none; }
.lw-long { width: 31px; }

/* work area */
.work { height: 424px; flex: none; display: flex; }
.vbar { width: 14px; flex: none; display: flex; flex-direction: column; align-items: center; gap: 1.4px; background: #f0eff3; padding-top: 6px; }
.vbar-left { padding-right: 1px; }
.vbar-right { align-items: flex-start; padding-left: 2px; padding-top: 7px; }
.vic { width: 10px; height: 10px; flex: none; }
.vsep { display: block; width: 12px; height: 4px; margin: 3px 0 3px -1px; border-top: 1px solid #d0d0d6; border-bottom: 1px solid #d0d0d6; flex: none; }
.canvas { flex: 1; background: #000; position: relative; overflow: hidden; }
.drawing { display: block; }
.yel { fill: #fff200; }
.blk { fill: #000; }
.cir { fill: #000; stroke: #a8a86e; stroke-width: .7; }
.chord { stroke: #a8a86e; stroke-width: 1; fill: none; }
.big { font: 49px "Liberation Serif", serif; text-anchor: middle; fill: #23230f; stroke: #b8b67c; stroke-width: .7; }
.small { font: 21px "Liberation Serif", serif; text-anchor: middle; fill: #aeac72; }
.ucs { fill: none; stroke: #a8a8a8; stroke-width: 1; }
.ucs-t { font: 15px "Liberation Sans", sans-serif; text-anchor: middle; fill: #a0a0a0; }

/* tabs */
.tabs { height: 11px; flex: none; display: flex; align-items: flex-start; padding-left: 15px; gap: 2px; border-bottom: 1px solid #c8c8cc; }
.tabnav { display: flex; gap: 2px; margin-right: 3px; }
.tabnav span { width: 8px; height: 8px; margin-top: 1px; font-size: 5px; line-height: 8px; text-align: center; background: #e4e4ea; color: #222; }
.tab { font-size: 6px; line-height: 9px; height: 10px; padding: 0 3px; color: #333; border: 1px solid #555; border-top: 0; border-radius: 0 0 3px 3px; }
.tab-on { background: #6a6a6e; color: #eee; padding: 0; }

/* command line */
.command { height: 29px; flex: none; padding: 3px 0 0 8px; position: relative; }
.cmd-line { height: 12.5px; line-height: 12px; padding-left: 2px; font-size: 6.5px; letter-spacing: .9px; background: #fff; color: #333; border-bottom: 1px solid #d0d0d4; border-left: 1px solid #aaa; }
.cmd-scroll { position: absolute; left: 955px; top: 19px; width: 28px; height: 8px; background: #fff; }
.cmd-thumb { display: block; width: 10px; height: 8px; margin-left: 5px; background: #dcdce0; }

/* status */
.status { height: 13px; flex: none; display: flex; align-items: center; gap: 2px; padding-left: 2px; position: relative; border-top: 1px solid #dadade; }
.coords { width: 131px; font: 6.2px/11px "Liberation Mono", monospace; letter-spacing: -.4px; padding-left: 1px; color: #333; border: 1px solid #dcdce0; margin-right: 1px; flex: none; white-space: nowrap; }
.st { font-size: 6px; line-height: 9px; height: 11px; padding: 0; color: #333; border: 1px solid transparent; flex: none; white-space: nowrap; }
.st-l { font-family: "Liberation Serif", serif; font-size: 5.5px; width: 15px; }
.st-on { background: #fbfbfd; border-color: #8a8a90; }
.tray { position: absolute; right: 2px; top: 1px; display: flex; align-items: center; gap: 1px; }
.tic { width: 10px; height: 10px; flex: none; }
.tray .caret { margin: 0 3px; }

/* taskbar */
.taskbar {
  height: 3px;
  flex: none;
  background:
    radial-gradient(ellipse 8px 3px at 20px 3px, #dfe8f0 60%, transparent 100%),
    radial-gradient(ellipse 10px 3px at 108px 3px, #dfe8f0 60%, transparent 100%),
    radial-gradient(ellipse 9px 3px at 178px 3px, #e8eef4 60%, transparent 100%),
    linear-gradient(#2c6aa0, #1c558c);
}

/* watermark */
.wm { position: absolute; left: 0; top: 0; width: 1000px; height: 546px; pointer-events: none; overflow: hidden; }
.wm > * { position: absolute; }
.wm-paw { left: 829px; top: 439px; fill: rgba(235, 235, 235, .7); }
.wm-bai { left: 768px; top: 457px; font: bold 37px/46px "Liberation Sans", sans-serif; color: rgba(235, 235, 235, .68); }
.wm-du { left: 846px; top: 471px; font: bold 17px/20px "Liberation Sans", sans-serif; color: #222; opacity: .75; }
.wm-cn { left: 883px; top: 461px; font: 500 29px/36px "Noto Sans CJK SC", sans-serif; color: rgba(235, 235, 235, .66); }
.wm-url { left: 768px; top: 498px; font: 19.5px/26px "Liberation Sans", sans-serif; color: rgba(190, 190, 190, .6); white-space: nowrap; }
.mascot { left: 940px; top: 478px; }
```
